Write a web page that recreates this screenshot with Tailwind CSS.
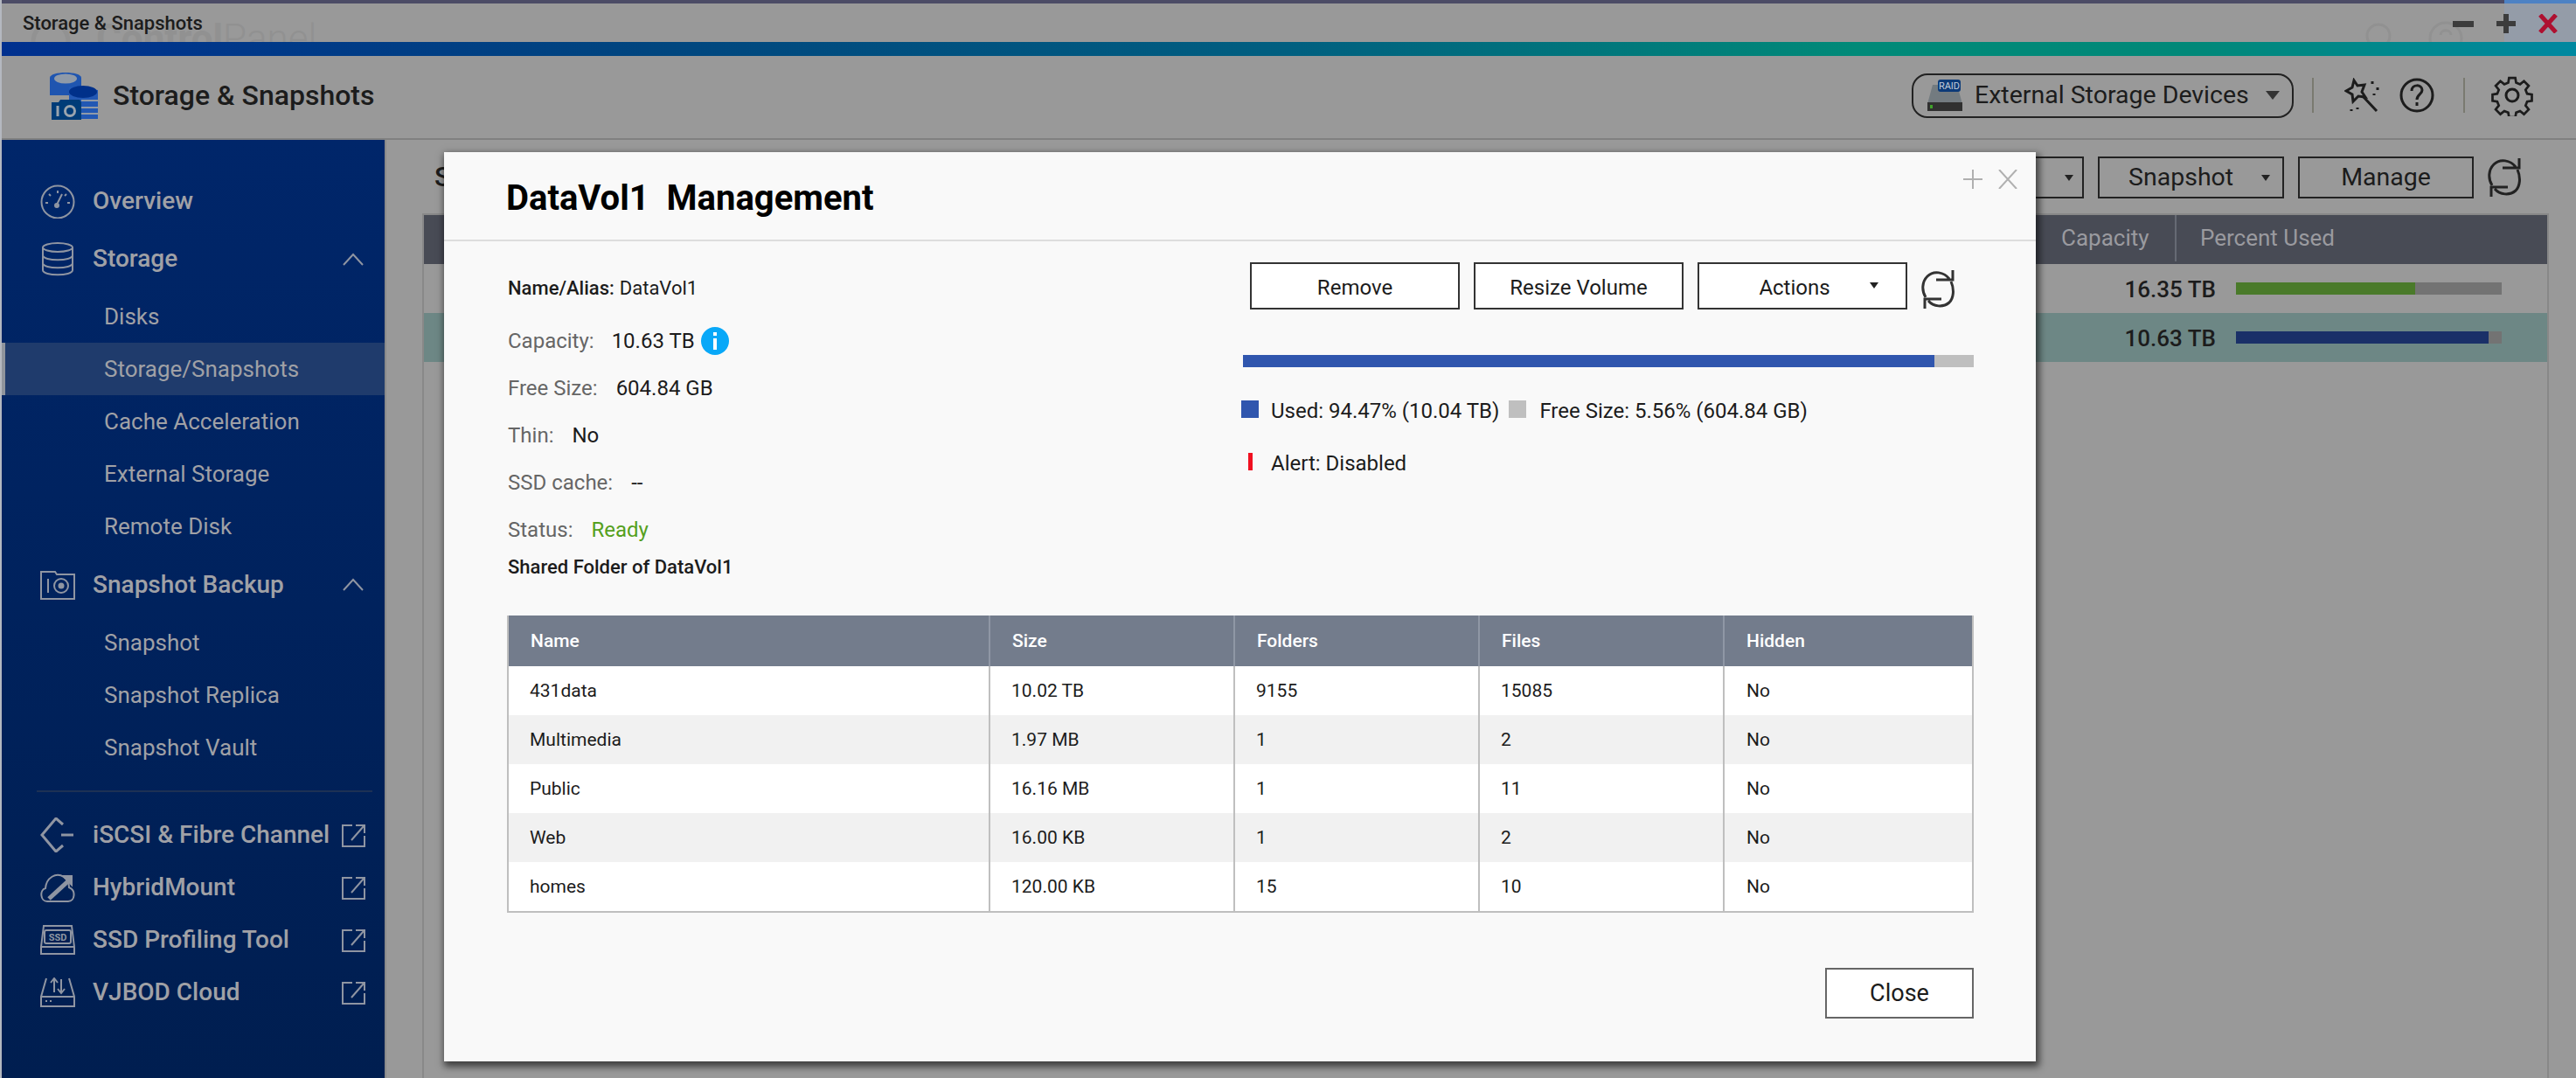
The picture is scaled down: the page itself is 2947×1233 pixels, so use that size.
<!DOCTYPE html>
<html lang="en">
<head>
    <meta charset="UTF-8">
    <title>Storage &amp; Snapshots</title>
    <script src="https://cdn.jsdelivr.net/npm/@tailwindcss/browser@4"></script>
</head>
<body class="bg-[#999999]">
    <!-- shared icons -->
    <svg class="hidden">
        <symbol id="refresh" viewBox="0 0 38 46">
            <path d="M36 1v11H17M32 11C26 3 14 1 7 8 1 14 0 24 5 32" fill="none" stroke="currentColor" stroke-width="3"/>
            <path d="M4 45V34h19M8 36c6 7 17 8 24 2 5-5 6-15 2-24" fill="none" stroke="currentColor" stroke-width="3"/>
        </symbol>
        <symbol id="external" viewBox="0 0 27 27">
            <path d="M12 2H1v24h25V14" fill="none" stroke="currentColor" stroke-width="2"/>
            <path d="M11 19 25 3M16 2h10v9" fill="none" stroke="currentColor" stroke-width="2"/>
        </symbol>
        <symbol id="chevron" viewBox="0 0 24 15">
            <path d="M1 14 12 2l11 12" fill="none" stroke="currentColor" stroke-width="2"/>
        </symbol>
    </svg>

    <div class="relative w-[2947px] h-[1233px] overflow-hidden border-l-2 border-[#b4b8c0] font-['Roboto',sans-serif] text-[#1c1c1c]">
        <!-- window chrome -->
        <div class="flex h-[4px]">
            <div class="flex-1 bg-[#4c4c66]"></div>
            <div class="w-[82px] bg-[#4d82c4]"></div>
        </div>
        <div class="relative flex h-[44px] items-center overflow-hidden pl-[24px]">
            <svg class="absolute left-[33px] top-[20px] h-[46px] w-[46px]" viewBox="0 0 46 46" fill="none" stroke="#929292" stroke-width="5"><circle cx="23" cy="23" r="20"/></svg>
            <div class="absolute left-[108px] top-[18px] text-[44px] leading-[44px] text-[#919191] whitespace-nowrap"><span class="font-bold">Control</span><span class="font-light">Panel</span></div>
            <svg class="absolute left-[2704px] top-[22px] h-[30px] w-[30px]" viewBox="0 0 30 30" fill="none" stroke="#919191" stroke-width="3"><circle cx="15" cy="15" r="13"/></svg>
            <svg class="absolute left-[2776px] top-[20px] h-[40px] w-[40px]" viewBox="0 0 40 40" fill="none" stroke="#919191" stroke-width="3"><circle cx="20" cy="20" r="18"/><path d="M14 16c0-7 12-7 12 0"/></svg>
            <div class="absolute right-0 top-0 h-full w-[82px] bg-[#949ca8]"></div>
            <div class="relative text-[22px] font-medium">Storage &amp; Snapshots</div>
            <div class="absolute right-[21px] top-[12px] flex items-center gap-[26px]">
                <div class="h-[7px] w-[24px] bg-[#3c3c3c]"></div>
                <svg class="h-[22px] w-[22px]" viewBox="0 0 22 22"><path d="M11 0v22M0 11h22" stroke="#3c3c3c" stroke-width="6"/></svg>
                <svg class="h-[22px] w-[22px]" viewBox="0 0 22 22"><path d="M2 1l18 20M20 1 2 21" stroke="#ae1030" stroke-width="5"/></svg>
            </div>
        </div>
        <div class="h-[16px] bg-[linear-gradient(90deg,#00308f,#00457f_25%,#005f80_50%,#008a78_72%,#008878_85%,#0088a0)]"></div>

        <header class="flex h-[96px] items-center border-b-2 border-[#808080] pb-[4px] pl-[55px] pr-[49px]">
            <svg class="h-[56px] w-[55px]" viewBox="0 0 55 56">
                <path d="M0 8C0 0 36 0 36 8v20H0z" fill="#1f55b0"/>
                <ellipse cx="18" cy="9" rx="13" ry="5.500" fill="#8f9aa8"/>
                <path d="M22 18 55 22v33H22z" fill="#2258b4"/>
                <ellipse cx="38" cy="24" rx="16" ry="7" fill="#00308a"/>
                <path d="M36 34h19M36 42h19M36 49h19" stroke="#8f9aa8" stroke-width="2"/>
                <path d="M2 36h8l2-3h22l2 3v20H2z" fill="#003c78"/>
                <path d="M9 40v12" stroke="#9aa4ae" stroke-width="3"/>
                <circle cx="23" cy="46" r="5.500" fill="none" stroke="#9aa4ae" stroke-width="3"/>
            </svg>
            <div class="ml-[17px] text-[32px] font-medium">Storage &amp; Snapshots</div>
            <div class="ml-auto flex h-[51px] w-[437px] items-center rounded-[18px] border-2 border-[#222222] pl-[16px]">
                <svg class="h-[36px] w-[40px]" viewBox="0 0 40 36">
                    <path d="M6 6h28l6 22H0z" fill="#737b80"/>
                    <rect y="26" width="40" height="10" fill="#303030"/>
                    <rect x="3" y="29" width="3" height="4" fill="#3fa02a"/>
                    <rect x="12" y="0" width="26" height="14" rx="3" fill="#0c3a78"/>
                    <text x="25" y="11" text-anchor="middle" font-size="11" fill="#c4ccd8" font-family="Roboto">RAID</text>
                </svg>
                <span class="ml-[14px] text-[28.5px]">External Storage Devices</span>
                <svg class="ml-[19px] h-[10px] w-[16px]" viewBox="0 0 16 10"><path d="M0 0h16L8 10z" fill="#333333"/></svg>
            </div>
            <div class="ml-[21px] h-[40px] w-[2px] bg-[#7a7a70]"></div>
            <svg class="ml-[35px] h-[40px] w-[40px]" viewBox="0 0 40 40" fill="none" stroke="#1c1c1c" stroke-width="3">
                <path d="M11 3l4 6 8-1-3 8 4 6-8-1-6 6-1-8-7-4 7-4z"/>
                <path d="M22 22l15 16M32 4v3M38 11v3M34 18v2M8 36v2M15 34v2" />
            </svg>
            <svg class="ml-[23px] h-[40px] w-[40px]" viewBox="0 0 40 40" fill="none" stroke="#1c1c1c" stroke-width="3">
                <circle cx="20" cy="20" r="18"/>
                <path d="M14 15c0-8 12-8 12-1 0 5-6 5-6 11M20 28v4"/>
            </svg>
            <div class="ml-[33px] h-[40px] w-[2px] bg-[#7a7a70]"></div>
            <svg class="ml-[30px] h-[48px] w-[48px]" viewBox="0 0 48 48" fill="none" stroke="#1c1c1c" stroke-width="3">
                <path d="M20 2h8l1 6 5 2 5-4 6 6-4 5 2 5 6 1v8l-6 1-2 5 4 5-6 6-5-4-5 2-1 6h-8l-1-6-5-2-5 4-6-6 4-5-2-5-6-1v-8l6-1 2-5-4-5 6-6 5 4 5-2z" transform="translate(2.400 2.400) scale(.9)"/>
                <circle cx="24" cy="24" r="7"/>
            </svg>
        </header>

        <div class="flex h-[1073px]">
            <!-- sidebar -->
            <aside class="w-[440px] shrink-0 border-r-2 border-[#8a8a8a] bg-linear-to-b from-[#00266a] to-[#001e50] pt-[40px] text-[#a0a1a6]">
                <div class="flex h-[60px] items-center pl-[44px] text-[28px] font-medium">
                    <svg class="h-[40px] w-[40px]" viewBox="0 0 40 40" fill="none" stroke="#8f95a2" stroke-width="2">
                        <circle cx="20" cy="21" r="18.500"/>
                        <path d="M20 8v3M10 12l2 2M30 12l-2 2M6 22h3M34 22h-3M25 12l-6 12" />
                        <circle cx="19" cy="25" r="2" fill="#8f95a2"/>
                    </svg>
                    <span class="ml-[20px]">Overview</span>
                </div>
                <div class="flex h-[72px] items-center pl-[44px] pr-[24px] text-[28px] font-medium">
                    <svg class="h-[40px] w-[40px]" viewBox="0 0 40 40" fill="none" stroke="#8f95a2" stroke-width="2">
                        <ellipse cx="20" cy="7" rx="17" ry="5"/>
                        <path d="M3 7v26c0 7 34 7 34 0V7M3 16c0 7 34 7 34 0M3 25c0 7 34 7 34 0"/>
                    </svg>
                    <span class="ml-[20px]">Storage</span>
                    <svg class="ml-auto h-[15px] w-[24px] text-[#8f95a2]"><use href="#chevron"/></svg>
                </div>
                <div class="flex h-[60px] items-center pl-[117px] text-[26px]">Disks</div>
                <div class="flex h-[60px] items-center border-l-4 border-[#8f949c] bg-[#1f3b6c] pl-[113px] text-[26px]">Storage/Snapshots</div>
                <div class="flex h-[60px] items-center pl-[117px] text-[26px]">Cache Acceleration</div>
                <div class="flex h-[60px] items-center pl-[117px] text-[26px]">External Storage</div>
                <div class="flex h-[60px] items-center pl-[117px] text-[26px]">Remote Disk</div>
                <div class="flex h-[73px] items-center pl-[44px] pr-[24px] text-[28px] font-medium">
                    <svg class="h-[34px] w-[40px]" viewBox="0 0 40 34" fill="none" stroke="#8f95a2" stroke-width="2">
                        <path d="M1 33V2h16l2 3h20v28z"/>
                        <path d="M9 10v16" />
                        <circle cx="24" cy="18" r="8"/>
                        <circle cx="24" cy="18" r="2.500" fill="#8f95a2"/>
                    </svg>
                    <span class="ml-[20px]">Snapshot Backup</span>
                    <svg class="ml-auto h-[15px] w-[24px] text-[#8f95a2]"><use href="#chevron"/></svg>
                </div>
                <div class="flex h-[60px] items-center pl-[117px] text-[26px]">Snapshot</div>
                <div class="flex h-[60px] items-center pl-[117px] text-[26px]">Snapshot Replica</div>
                <div class="flex h-[60px] items-center pl-[117px] text-[26px]">Snapshot Vault</div>

                <div class="ml-[40px] mr-[14px] mt-[19px] h-[2px] bg-[#1d3154]"></div>

                <div class="mt-[19px] flex h-[60px] items-center pl-[44px] pr-[22px] text-[28px] font-medium">
                    <svg class="h-[40px] w-[40px]" viewBox="0 0 40 40" fill="none" stroke="#8f95a2" stroke-width="3">
                        <path d="M26 8 18 1 2 20l16 19 8-7"/>
                        <path d="M24 20h14"/>
                    </svg>
                    <span class="ml-[20px]">iSCSI &amp; Fibre Channel</span>
                    <svg class="ml-auto h-[27px] w-[27px] text-[#8f95a2]"><use href="#external"/></svg>
                </div>
                <div class="flex h-[60px] items-center pl-[44px] pr-[22px] text-[28px] font-medium">
                    <svg class="h-[34px] w-[40px]" viewBox="0 0 40 34" fill="none" stroke="#8f95a2" stroke-width="2">
                        <path d="M8 33C0 33-1 20 6 18 7 6 18-1 27 5c5 3 6 7 6 12 8 3 7 16-1 16z"/>
                        <path d="M10 30 34 8" stroke-width="5"/>
                        <path d="M26 4h10v10z" fill="#8f95a2"/>
                    </svg>
                    <span class="ml-[20px]">HybridMount</span>
                    <svg class="ml-auto h-[27px] w-[27px] text-[#8f95a2]"><use href="#external"/></svg>
                </div>
                <div class="flex h-[60px] items-center pl-[44px] pr-[22px] text-[28px] font-medium">
                    <svg class="h-[34px] w-[40px]" viewBox="0 0 40 34" fill="none" stroke="#8f95a2" stroke-width="2">
                        <path d="M4 1h32l3 24v8H1v-8zM1 25h38"/>
                        <rect x="5" y="6" width="30" height="15" rx="2"/>
                        <text x="20" y="18" text-anchor="middle" font-size="11" font-weight="700" fill="#8f95a2" stroke="none" font-family="Roboto">SSD</text>
                    </svg>
                    <span class="ml-[20px]">SSD Profiling Tool</span>
                    <svg class="ml-auto h-[27px] w-[27px] text-[#8f95a2]"><use href="#external"/></svg>
                </div>
                <div class="flex h-[60px] items-center pl-[44px] pr-[22px] text-[28px] font-medium">
                    <svg class="h-[34px] w-[40px]" viewBox="0 0 40 34" fill="none" stroke="#8f95a2" stroke-width="2">
                        <path d="M7 1 1 22v11h38V22L33 1M1 22h38M6 27h2M11 27h2"/>
                        <path d="M16 17V2M12 6l4-5 4 5M24 2v15M20 13l4 5 4-5"/>
                    </svg>
                    <span class="ml-[20px]">VJBOD Cloud</span>
                    <svg class="ml-auto h-[27px] w-[27px] text-[#8f95a2]"><use href="#external"/></svg>
                </div>
            </aside>

            <!-- page behind the dialog -->
            <main class="flex-1 pl-[41px] pr-[31px] pt-[19px]">
                <div class="flex h-[48px] items-center">
                    <div class="ml-[14px] text-[31px] font-medium">Storage/Snapshots</div>
                    <div class="ml-auto mr-[32px] flex items-center gap-[16px]">
                        <div class="flex h-[48px] w-[200px] items-center justify-end border-2 border-[#222222] pr-[10px]">
                            <svg class="h-[7px] w-[10px]" viewBox="0 0 10 7"><path d="M0 0h10L5 7z" fill="#222222"/></svg>
                        </div>
                        <div class="flex h-[48px] w-[213px] items-center border-2 border-[#222222] pl-[33px] text-[28.5px]">
                            Snapshot
                            <svg class="ml-[32px] h-[7px] w-[10px]" viewBox="0 0 10 7"><path d="M0 0h10L5 7z" fill="#222222"/></svg>
                        </div>
                        <div class="flex h-[48px] w-[201px] items-center justify-center border-2 border-[#222222] text-[28.5px]">Manage</div>
                        <svg class="h-[46px] w-[38px] text-[#222222]"><use href="#refresh"/></svg>
                    </div>
                </div>
                <div class="mt-[17px] h-[989px] border-x-2 border-t-2 border-[#888888]">
                    <div class="flex h-[56px] items-center bg-[#484b55] pb-[3px] text-[26px] text-[#9a9a9f]">
                        <div class="ml-auto w-[130px]">Capacity</div>
                        <div class="flex h-full w-[426px] items-center border-l-2 border-[#666a74] pl-[27px]">Percent Used</div>
                    </div>
                    <div class="flex h-[56px] items-center justify-end pr-[52px]">
                        <span class="mt-[3px] text-[26px] font-medium">16.35 TB</span>
                        <div class="ml-[23px] h-[14px] w-[304px] bg-[#737373]">
                            <div class="h-full w-[205px] bg-[#4a7a2a]"></div>
                        </div>
                    </div>
                    <div class="flex h-[56px] items-center justify-end bg-[#6d8785] pr-[52px]">
                        <span class="mt-[3px] text-[26px] font-medium">10.63 TB</span>
                        <div class="ml-[23px] h-[14px] w-[304px] bg-[#737373]">
                            <div class="h-full w-[289px] bg-[#1a3068]"></div>
                        </div>
                    </div>
                </div>
            </main>
        </div>

        <!-- dialog -->
        <section class="absolute left-[506px] top-[174px] h-[1040px] w-[1821px] bg-[#f9f9f9] shadow-[2px_4px_8px_2px_rgba(0,0,0,0.6)]">
            <div class="relative flex h-[102px] items-center border-b-2 border-[#dddddd] pl-[71px] pt-[6px]">
                <h1 class="text-[40px] font-bold text-black whitespace-pre">DataVol1  Management</h1>
                <svg class="absolute right-[61px] top-[20px] h-[22px] w-[22px]" viewBox="0 0 22 22"><path d="M11 0v22M0 11h22" stroke="#b0b0b0" stroke-width="2"/></svg>
                <svg class="absolute right-[21px] top-[20px] h-[22px] w-[22px]" viewBox="0 0 22 22"><path d="M1 0l20 22M21 0 1 22" stroke="#b0b0b0" stroke-width="2"/></svg>
            </div>

            <div class="flex pl-[73px] pr-[71px]">
                <div class="w-[839px] pt-[26px] text-[24px] text-[#666666]">
                    <div class="flex h-[54px] items-center text-[22px] text-[#1c1c1c]"><span class="font-medium">Name/Alias:</span><span class="ml-[6px]">DataVol1</span></div>
                    <div class="mt-[7px] flex h-[54px] items-center">Capacity:<span class="ml-[20px] text-[#1c1c1c]">10.63 TB</span>
                        <svg class="ml-[7px] h-[32px] w-[32px]" viewBox="0 0 32 32"><circle cx="16" cy="16" r="16" fill="#08a8f8"/><path d="M16 13v13M16 6v4" stroke="#ffffff" stroke-width="4"/></svg>
                    </div>
                    <div class="flex h-[54px] items-center">Free Size:<span class="ml-[21px] text-[#1c1c1c]">604.84 GB</span></div>
                    <div class="flex h-[54px] items-center">Thin:<span class="ml-[21px] text-[#1c1c1c]">No</span></div>
                    <div class="flex h-[54px] items-center">SSD cache:<span class="ml-[21px] text-[#1c1c1c]">--</span></div>
                    <div class="flex h-[54px] items-center">Status:<span class="ml-[21px] text-[#55a020]">Ready</span></div>
                    <div class="flex h-[30px] items-center text-[22px] font-medium text-[#1c1c1c]">Shared Folder of DataVol1</div>
                </div>

                <div class="w-[838px] pt-[24px] text-[24px]">
                    <div class="ml-[10px] flex items-start gap-[16px]">
                        <button class="h-[54px] w-[240px] border-2 border-[#333333] bg-white pt-[3px]">Remove</button>
                        <button class="h-[54px] w-[240px] border-2 border-[#333333] bg-white pt-[3px]">Resize Volume</button>
                        <button class="relative h-[54px] w-[240px] border-2 border-[#333333] bg-white pr-[18px] pt-[3px]">Actions
                            <svg class="absolute right-[31px] top-[21px] h-[7px] w-[10px]" viewBox="0 0 10 7"><path d="M0 0h10L5 7z" fill="#222222"/></svg>
                        </button>
                        <svg class="mt-[8px] h-[46px] w-[38px] text-[#333333]"><use href="#refresh"/></svg>
                    </div>
                    <div class="ml-[2px] mt-[52px] flex h-[14px] w-[836px]">
                        <div class="w-[791px] bg-[#3056ae]"></div>
                        <div class="flex-1 bg-[#bfbfbf]"></div>
                    </div>
                    <div class="mt-[38px] flex h-[20px] items-center">
                        <div class="h-[20px] w-[20px] bg-[#3056ae]"></div>
                        <span class="ml-[14px] mt-[3px]">Used: 94.47% (10.04 TB)</span>
                        <div class="ml-[11px] h-[20px] w-[20px] bg-[#bfbfbf]"></div>
                        <span class="ml-[15px] mt-[3px]">Free Size: 5.56% (604.84 GB)</span>
                    </div>
                    <div class="mt-[40px] flex h-[20px] items-center">
                        <div class="ml-[8px] h-[20px] w-[5px] bg-[#f01020]"></div>
                        <span class="ml-[21px] mt-[3px]">Alert: Disabled</span>
                    </div>
                </div>
            </div>

            <div class="ml-[72px] mt-[41px] w-[1678px] border-x-2 border-b-2 border-[#bfbfbf]">
                <table class="w-full table-fixed border-separate border-spacing-0 text-left text-[21px] [&_td]:pt-[2px] [&_th]:pt-[2px]">
                    <thead class="bg-[#737c8c] text-white">
                        <tr class="h-[58px]">
                            <th class="w-[551px] border-r-2 border-[#8f97a5] pl-[25px] font-medium">Name</th>
                            <th class="w-[280px] border-r-2 border-[#8f97a5] pl-[25px] font-medium">Size</th>
                            <th class="w-[280px] border-r-2 border-[#8f97a5] pl-[25px] font-medium">Folders</th>
                            <th class="w-[280px] border-r-2 border-[#8f97a5] pl-[25px] font-medium">Files</th>
                            <th class="pl-[25px] font-medium">Hidden</th>
                        </tr>
                    </thead>
                    <tbody>
                        <tr class="h-[56px] bg-white">
                            <td class="border-r-2 border-[#bfbfbf] pl-[24px]">431data</td><td class="border-r-2 border-[#bfbfbf] pl-[24px]">10.02 TB</td><td class="border-r-2 border-[#bfbfbf] pl-[24px]">9155</td><td class="border-r-2 border-[#bfbfbf] pl-[24px]">15085</td><td class="pl-[25px]">No</td>
                        </tr>
                        <tr class="h-[56px] bg-[#f1f1f1]">
                            <td class="border-r-2 border-[#bfbfbf] pl-[24px]">Multimedia</td><td class="border-r-2 border-[#bfbfbf] pl-[24px]">1.97 MB</td><td class="border-r-2 border-[#bfbfbf] pl-[24px]">1</td><td class="border-r-2 border-[#bfbfbf] pl-[24px]">2</td><td class="pl-[25px]">No</td>
                        </tr>
                        <tr class="h-[56px] bg-white">
                            <td class="border-r-2 border-[#bfbfbf] pl-[24px]">Public</td><td class="border-r-2 border-[#bfbfbf] pl-[24px]">16.16 MB</td><td class="border-r-2 border-[#bfbfbf] pl-[24px]">1</td><td class="border-r-2 border-[#bfbfbf] pl-[24px]">11</td><td class="pl-[25px]">No</td>
                        </tr>
                        <tr class="h-[56px] bg-[#f1f1f1]">
                            <td class="border-r-2 border-[#bfbfbf] pl-[24px]">Web</td><td class="border-r-2 border-[#bfbfbf] pl-[24px]">16.00 KB</td><td class="border-r-2 border-[#bfbfbf] pl-[24px]">1</td><td class="border-r-2 border-[#bfbfbf] pl-[24px]">2</td><td class="pl-[25px]">No</td>
                        </tr>
                        <tr class="h-[56px] bg-white">
                            <td class="border-r-2 border-[#bfbfbf] pl-[24px]">homes</td><td class="border-r-2 border-[#bfbfbf] pl-[24px]">120.00 KB</td><td class="border-r-2 border-[#bfbfbf] pl-[24px]">15</td><td class="border-r-2 border-[#bfbfbf] pl-[24px]">10</td><td class="pl-[25px]">No</td>
                        </tr>
                    </tbody>
                </table>
            </div>

            <div class="mr-[71px] mt-[63px] flex justify-end">
                <button class="h-[58px] w-[170px] border-2 border-[#666666] bg-white text-[27px]">Close</button>
            </div>
        </section>
    </div>
</body>
</html>
